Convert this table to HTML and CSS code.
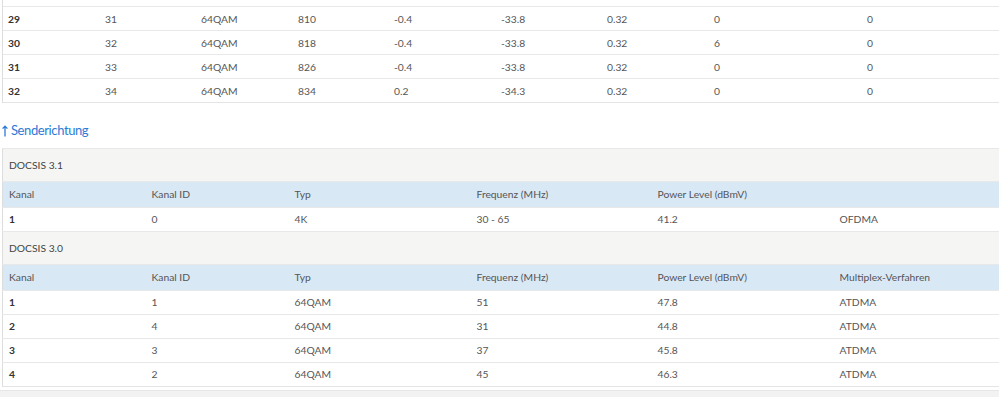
FILE: index.html
```html
<!DOCTYPE html>
<html lang="de">
<head>
    <meta charset="UTF-8">
    <title>Kanalübersicht</title>
    <link rel="stylesheet" href="styles.css">
</head>
<body>
    <div class="page">
        <div class="down-panel">
            <table class="chan-table down-table">
                <colgroup>
                    <col class="c96"><col class="c96"><col class="c97"><col class="c96">
                    <col class="c107"><col class="c106"><col class="c107"><col class="c153"><col>
                </colgroup>
                <tbody>
                    <tr><td class="num">29</td><td>31</td><td>64QAM</td><td>810</td><td>-0.4</td><td>-33.8</td><td>0.32</td><td>0</td><td>0</td></tr>
                    <tr><td class="num">30</td><td>32</td><td>64QAM</td><td>818</td><td>-0.4</td><td>-33.8</td><td>0.32</td><td>6</td><td>0</td></tr>
                    <tr><td class="num">31</td><td>33</td><td>64QAM</td><td>826</td><td>-0.4</td><td>-33.8</td><td>0.32</td><td>0</td><td>0</td></tr>
                    <tr><td class="num">32</td><td>34</td><td>64QAM</td><td>834</td><td>0.2</td><td>-34.3</td><td>0.32</td><td>0</td><td>0</td></tr>
                </tbody>
            </table>
        </div>

        <h2 class="direction">
            <a href="#">
                <svg class="arrow" width="6" height="12" viewBox="0 0 6 12">
                    <path d="M3 11.5V1.2M0.6 3.6L3 1.2L5.4 3.6" fill="none" stroke="currentColor" stroke-width="1.3"/>
                </svg>
                Senderichtung
            </a>
        </h2>

        <table class="chan-table up-table">
            <colgroup>
                <col class="c143"><col class="c143"><col class="c182"><col class="c181"><col class="c182"><col>
            </colgroup>
            <tbody>
                <tr class="section"><td colspan="6">DOCSIS 3.1</td></tr>
                <tr class="head"><td>Kanal</td><td>Kanal ID</td><td>Typ</td><td>Frequenz (MHz)</td><td>Power Level (dBmV)</td><td></td></tr>
                <tr><td class="num">1</td><td>0</td><td>4K</td><td>30 - 65</td><td>41.2</td><td>OFDMA</td></tr>
                <tr class="section"><td colspan="6">DOCSIS 3.0</td></tr>
                <tr class="head"><td>Kanal</td><td>Kanal ID</td><td>Typ</td><td>Frequenz (MHz)</td><td>Power Level (dBmV)</td><td>Multiplex-Verfahren</td></tr>
                <tr><td class="num">1</td><td>1</td><td>64QAM</td><td>51</td><td>47.8</td><td>ATDMA</td></tr>
                <tr><td class="num">2</td><td>4</td><td>64QAM</td><td>31</td><td>44.8</td><td>ATDMA</td></tr>
                <tr><td class="num">3</td><td>3</td><td>64QAM</td><td>37</td><td>45.8</td><td>ATDMA</td></tr>
                <tr><td class="num">4</td><td>2</td><td>64QAM</td><td>45</td><td>46.3</td><td>ATDMA</td></tr>
            </tbody>
        </table>

        <div class="next-panel"></div>
    </div>
</body>
</html>
```

FILE: styles.css
```css
body {
    margin: 0;
    background-color: #ffffff;
    font-family: "Lato", "Liberation Sans", sans-serif;
    font-size: 10.3px;
    color: #555555;
    overflow: hidden;
}

.page {
    padding-left: 2px;
}

.chan-table {
    width: 997px;
    border-collapse: collapse;
    table-layout: fixed;
    border-bottom: 1px solid #e4e4e4;
}

.chan-table td {
    height: 23px;
    padding: 0 6px;
    border-top: 1px solid #e8e8e8;
    white-space: nowrap;
}

.chan-table td.num {
    font-weight: bold;
    color: #333333;
}

.down-panel {
    padding-top: 6px;
    border-left: 1px solid #dddddd;
}

.down-table td:first-child {
    padding-left: 5px;
}

.up-table {
    border-left: 1px solid #dddddd;
    border-top: 1px solid #e4e4e4;
}

.c96 { width: 96px; }
.c97 { width: 97px; }
.c106 { width: 106px; }
.c107 { width: 107px; }
.c153 { width: 153px; }
.c143 { width: 143px; }
.c181 { width: 181px; }
.c182 { width: 182px; }

.direction {
    margin: 18px 0 7px;
    font-size: 13px;
    font-weight: normal;
    line-height: 18px;
    letter-spacing: -0.4px;
}

.direction a {
    display: inline-flex;
    align-items: center;
    gap: 3px;
    color: #2b7bd6;
    text-decoration: none;
}

.arrow {
    margin-top: 1px;
}

.up-table tr.section td {
    height: 32px;
    background-color: #f5f5f3;
    color: #444444;
}

.up-table tr.head td {
    height: 25px;
    background-color: #d9e8f5;
}

.next-panel {
    height: 8px;
    margin-top: 3px;
    margin-left: -2px;
    background-color: #f2f2f2;
    border-top: 1px solid #e6e6e6;
}
```
